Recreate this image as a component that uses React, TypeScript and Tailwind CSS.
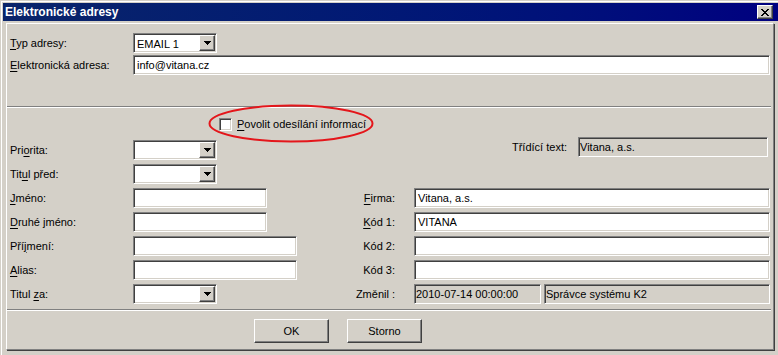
import React from "react";

const SUNKEN =
  "border border-t-[#808080] border-l-[#808080] border-b-white border-r-white shadow-[inset_1px_1px_0_#404040,inset_-1px_-1px_0_#d4d0c8]";
const RAISED =
  "border border-t-white border-l-white border-b-[#404040] border-r-[#404040] shadow-[inset_-1px_-1px_0_#808080]";

function U({ children }: { children: React.ReactNode }) {
  return <span className="underline decoration-1 underline-offset-[2px]">{children}</span>;
}

function Arrow() {
  return (
    <svg width="7" height="4" viewBox="0 0 7 4" shapeRendering="crispEdges">
      <rect x="0" y="0" width="7" height="1" fill="#000" />
      <rect x="1" y="1" width="5" height="1" fill="#000" />
      <rect x="2" y="2" width="3" height="1" fill="#000" />
      <rect x="3" y="3" width="1" height="1" fill="#000" />
    </svg>
  );
}

function Select({ value }: { value?: string }) {
  return (
    <div className={`w-[84px] h-[20px] bg-white flex p-px ${SUNKEN}`}>
      <div className="flex-1 pl-[2px] leading-[16px] pt-px">{value}</div>
      <div className={`w-[16px] h-[16px] bg-[#d4d0c8] flex items-center justify-center ${RAISED}`}>
        <Arrow />
      </div>
    </div>
  );
}

function Input({ w, value, ro }: { w: string; value?: string; ro?: boolean }) {
  return (
    <div
      className={`${w} h-[20px] ${ro ? "bg-[#d4d0c8] pl-px" : "bg-white pl-[3px]"} leading-[18px] whitespace-nowrap overflow-hidden ${SUNKEN}`}
    >
      {value}
    </div>
  );
}

function Label({ children, right }: { children: React.ReactNode; right?: boolean }) {
  return (
    <div className={`h-[20px] flex items-center whitespace-pre ${right ? "justify-end pr-[19px]" : "pl-[3px]"}`}>
      {children}
    </div>
  );
}

function Button({ children }: { children: React.ReactNode }) {
  return (
    <div className={`w-[75px] h-[24px] flex items-center justify-center ${RAISED}`}>{children}</div>
  );
}

function Sep() {
  return <div className="w-[764px] h-[2px] border-t border-t-[#808080] border-b border-b-white" />;
}

export default function App() {
  return (
    <div className="w-[778px] h-[355px] bg-[#d4d0c8] pl-px pt-px relative overflow-hidden text-[11px] text-black font-['Liberation_Sans',Arial,sans-serif]">
      <div className="h-full border-l border-t border-white pl-px pt-px flex flex-col">
        <div className="h-[18px] flex items-center justify-between bg-gradient-to-r from-[#0a246a] to-[#000080] pl-[2px] pr-[5px]">
          <span className="text-white font-bold text-[12px] leading-none">Elektronické adresy</span>
          <div className={`w-[16px] h-[14px] bg-[#d4d0c8] flex items-center justify-center ${RAISED}`}>
            <svg width="8" height="7" viewBox="0 0 8 7" shapeRendering="crispEdges">
              <path d="M0 0h2l2 2.5 2-2.5h2l-3 3.5 3 3.5h-2l-2-2.5-2 2.5h-2l3-3.5z" fill="#000" />
            </svg>
          </div>
        </div>

        <div className="mt-[2px] ml-[3px] mr-[4px] h-[327px] border-l border-t border-white border-r border-r-[#808080] border-b border-b-[#808080] shadow-[1px_1px_0_#404040] flex flex-col pt-[9px]">
          <div className="flex items-center h-[20px]">
            <div className="w-[126px] pl-[3px]">
              <U>T</U>yp adresy:
            </div>
            <Select value="EMAIL 1" />
          </div>
          <div className="flex items-center h-[20px] mt-[2px]">
            <div className="w-[126px] pl-[3px]">
              <U>E</U>lektronická adresa:
            </div>
            <Input w="w-[637px]" value="info@vitana.cz" />
          </div>

          <div className="mt-[31px]">
            <Sep />
          </div>

          <div className="mt-[10px] ml-[212px] h-[13px] flex items-center">
            <div className={`w-[13px] h-[13px] bg-white ${SUNKEN}`} />
            <span className="ml-[5px] whitespace-nowrap">
              <U>P</U>ovolit odesílání informací
            </span>
          </div>

          <div className="mt-[9px] grid grid-cols-[126px_197px_84px_356px] grid-rows-[repeat(7,20px)] gap-y-[4px]">
            <Label>
              Pri<U>o</U>rita:
            </Label>
            <div>
              <Select />
            </div>
            <div className="col-span-2 flex justify-end items-center -mt-[3px] h-[20px]">
              <span className="mr-[11px] whitespace-nowrap">Třídící text:</span>
              <div className="mr-[2px]">
                <Input w="w-[190px]" value="Vitana, a.s." ro />
              </div>
            </div>

            <Label>
              {"Tit"}
              <U>u</U>
              {"l před:"}
            </Label>
            <div>
              <Select />
            </div>
            <div />
            <div />

            <Label>
              <U>J</U>méno:
            </Label>
            <div>
              <Input w="w-[134px]" />
            </div>
            <Label right>
              <U>F</U>irma:
            </Label>
            <Input w="w-[356px]" value="Vitana, a.s." />

            <Label>
              <U>D</U>ruhé jméno:
            </Label>
            <div>
              <Input w="w-[134px]" />
            </div>
            <Label right>
              <U>K</U>ód 1:
            </Label>
            <Input w="w-[356px]" value="VITANA" />

            <Label>
              {"Pří"}
              <U>j</U>
              {"mení:"}
            </Label>
            <div>
              <Input w="w-[164px]" />
            </div>
            <Label right>Kód 2:</Label>
            <Input w="w-[356px]" />

            <Label>
              <U>A</U>lias:
            </Label>
            <div>
              <Input w="w-[164px]" />
            </div>
            <Label right>Kód 3:</Label>
            <Input w="w-[356px]" />

            <Label>
              {"Titul "}
              <U>z</U>
              {"a:"}
            </Label>
            <div>
              <Select />
            </div>
            <Label right>Změnil :</Label>
            <div className="flex gap-[3px]">
              <Input w="w-[127px]" value="2010-07-14 00:00:00" ro />
              <Input w="w-[226px]" value="Správce systému K2" ro />
            </div>
          </div>

          <div className="mt-[5px]">
            <Sep />
          </div>

          <div className="mt-[8px] ml-[247px] flex gap-[18px]">
            <Button>OK</Button>
            <Button>Storno</Button>
          </div>
        </div>
      </div>

      <svg className="absolute left-[207px] top-[103px]" width="168" height="41" viewBox="0 0 168 41">
        <ellipse cx="84" cy="20.5" rx="81.5" ry="18" fill="none" stroke="#e4161b" strokeWidth="2" />
      </svg>
    </div>
  );
}
